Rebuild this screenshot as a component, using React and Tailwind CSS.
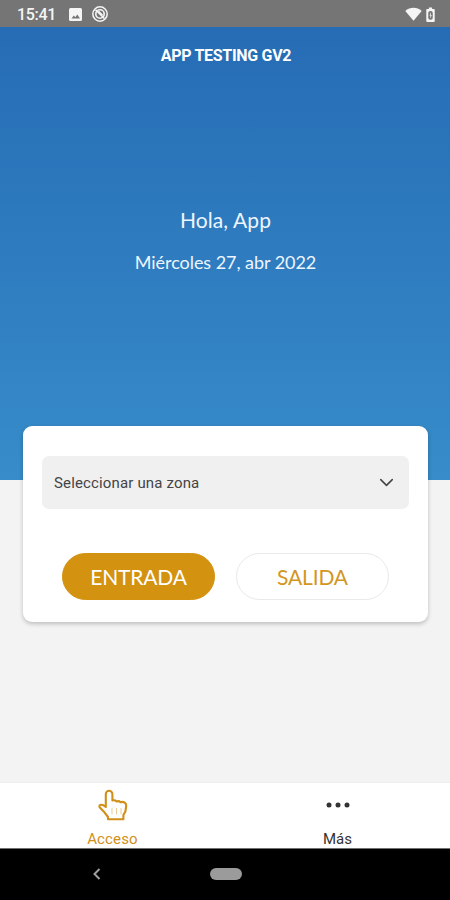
import { ChevronDown } from 'lucide-react';

const ACTIONS = [
    { label: 'ENTRADA', className: 'bg-[#d3920f] border-[#d3920f] text-white' },
    { label: 'SALIDA', className: 'bg-white border-[#e9e9e9] text-[#d3961f]' },
];

function StatusBar() {
    return (
        <div className="flex h-[27px] shrink-0 items-center bg-[#757575] pl-[17px] pr-[14px] pt-px text-[#f5f5f5]">
            <span className="w-[52px] pt-px text-[16px] font-medium leading-none tracking-[-0.3px]">15:41</span>
            {/* Screenshot notification */}
            <svg className="h-[13px] w-[13px]" viewBox="0 0 13 13">
                <rect width="13" height="13" rx="1.5" fill="currentColor" />
                <path d="M2.5 10.5 4.8 7.5 6.3 9.2 8.3 6.6 11 10.5Z" fill="#757575" />
            </svg>
            <svg className="ml-[10px] h-4 w-4" viewBox="0 0 16 16" fill="none" stroke="currentColor">
                <circle cx="8" cy="8" r="7.2" strokeWidth="1.5" />
                <circle cx="8" cy="8" r="4.2" strokeWidth="1.6" />
                <path d="M3.5 3.8 12.4 12.5M6.5 5.3l4 4" strokeWidth="1.6" />
            </svg>
            <svg className="ml-auto h-[14px] w-[17px]" viewBox="0 0 17 14">
                <path d="M.3 4C4.8-.4 12.2-.4 16.7 4L8.5 13.8Z" fill="currentColor" />
            </svg>
            <svg className="ml-[4px] mr-px h-[15px] w-[9px]" viewBox="0 0 9 16">
                <path d="M2.8.5h3.4V2H8a1 1 0 0 1 1 1v12a1 1 0 0 1-1 1H1a1 1 0 0 1-1-1V3a1 1 0 0 1 1-1h1.8Z" fill="currentColor" />
                <rect x="2.1" y="4.2" width="4.8" height="9.4" rx="2.2" fill="#757575" />
                <path d="M4.8 5.4 3.4 9h1v3.4L5.8 8.6H4.8Z" fill="currentColor" />
            </svg>
        </div>
    );
}

function Header() {
    return (
        <div className="flex h-[453px] shrink-0 flex-col items-center bg-linear-to-b from-[#266cb5] to-[#378cc9] text-white">
            <h1 className="ml-[2px] mt-[19px] whitespace-nowrap text-[16px] font-bold leading-[20px] tracking-[-0.3px]">APP TESTING GV2</h1>
            <p className="ml-px mt-[142px] whitespace-nowrap font-['Lato','Open_Sans',sans-serif] text-[21px] leading-[24px] tracking-[0.1px] text-[#edf5ff]">Hola, App</p>
            <p className="ml-px mt-[19px] whitespace-nowrap font-['Lato','Open_Sans',sans-serif] text-[18px] leading-[22px] tracking-[-0.05px] text-[#edf5ff]">Miércoles 27, abr 2022</p>
        </div>
    );
}

function AccessCard() {
    return (
        <div className="relative -mt-[54px] ml-[23px] h-[196px] w-[405px] shrink-0 rounded-[9px] bg-white pl-[19px] pt-[30px] shadow-[0_2px_4px_rgba(0,0,0,0.22)]">
            <button className="flex h-[53px] w-[367px] items-center justify-between rounded-[7px] bg-[#f0f0f0] pl-[12px] pr-[11px] text-[#444]">
                <span className="pt-[2px] text-[15px] leading-none tracking-[0.15px]">Seleccionar una zona</span>
                <ChevronDown size={23} strokeWidth={1.6} />
            </button>
            <div className="ml-5 mt-[44px] flex gap-[21px]">
                {ACTIONS.map((a) => (
                    <button
                        key={a.label}
                        className={`h-[47px] w-[153px] rounded-full border font-['Lato','Open_Sans',sans-serif] text-[21px] leading-none tracking-[-0.15px] ${a.className}`}
                    >
                        {a.label}
                    </button>
                ))}
            </div>
        </div>
    );
}

function TabBar() {
    return (
        <div className="mt-auto grid h-[66px] shrink-0 grid-cols-2 border-t border-[#efefef] bg-white text-[15px] leading-[18px]">
            <div className="flex flex-col items-center pt-[6px] text-[#d08f18]">
                <svg className="h-8 w-[30px]" viewBox="0 0 30 32" fill="none" stroke="currentColor" strokeWidth="2.1" strokeLinejoin="round" strokeLinecap="round">
                    <path d="M7.8 18V5a3.3 3.3 0 0 1 6.6 0V11.5Q17 10.8 18.6 12.4 21 11.6 22.6 13.2 25 12.4 27 13.8 28.4 14.8 28.2 17L27.4 22.5 25.4 26V30.2H10V28L5.5 22.2 1.6 18.2Q.8 16.2 3 15.8 5 15.6 7.8 18" />
                    <path d="M14 19.5v5.5M18.5 19.5v5.5M23 19.5v5.5" strokeWidth="1" opacity="0.45" />
                </svg>
                <span className="mt-[9px] tracking-[0.15px]">Acceso</span>
            </div>
            <div className="flex flex-col items-center pt-[6px] text-[#333]">
                <svg className="h-8 w-6" viewBox="0 0 24 32" fill="currentColor">
                    <circle cx="3" cy="16" r="2.5" />
                    <circle cx="12" cy="16" r="2.5" />
                    <circle cx="21" cy="16" r="2.5" />
                </svg>
                <span className="mt-[9px]">Más</span>
            </div>
        </div>
    );
}

function SystemNav() {
    return (
        <div className="flex h-[52px] shrink-0 items-center border-t border-[#707070] bg-black pb-px">
            <svg className="ml-[92px] h-3 w-[9px]" viewBox="0 0 9 12" fill="none" stroke="#a0a0a0" strokeWidth="2">
                <path d="M7.5 1 2.5 6l5 5" />
            </svg>
            <div className="ml-[109px] h-[12px] w-[32px] rounded-full bg-[#9b9b9b]" />
        </div>
    );
}

export default function App() {
    return (
        <div className="flex h-[900px] w-[450px] flex-col overflow-hidden bg-[#f3f3f3] font-['Roboto',sans-serif]">
            <StatusBar />
            <Header />
            <AccessCard />
            <TabBar />
            <SystemNav />
        </div>
    );
}
